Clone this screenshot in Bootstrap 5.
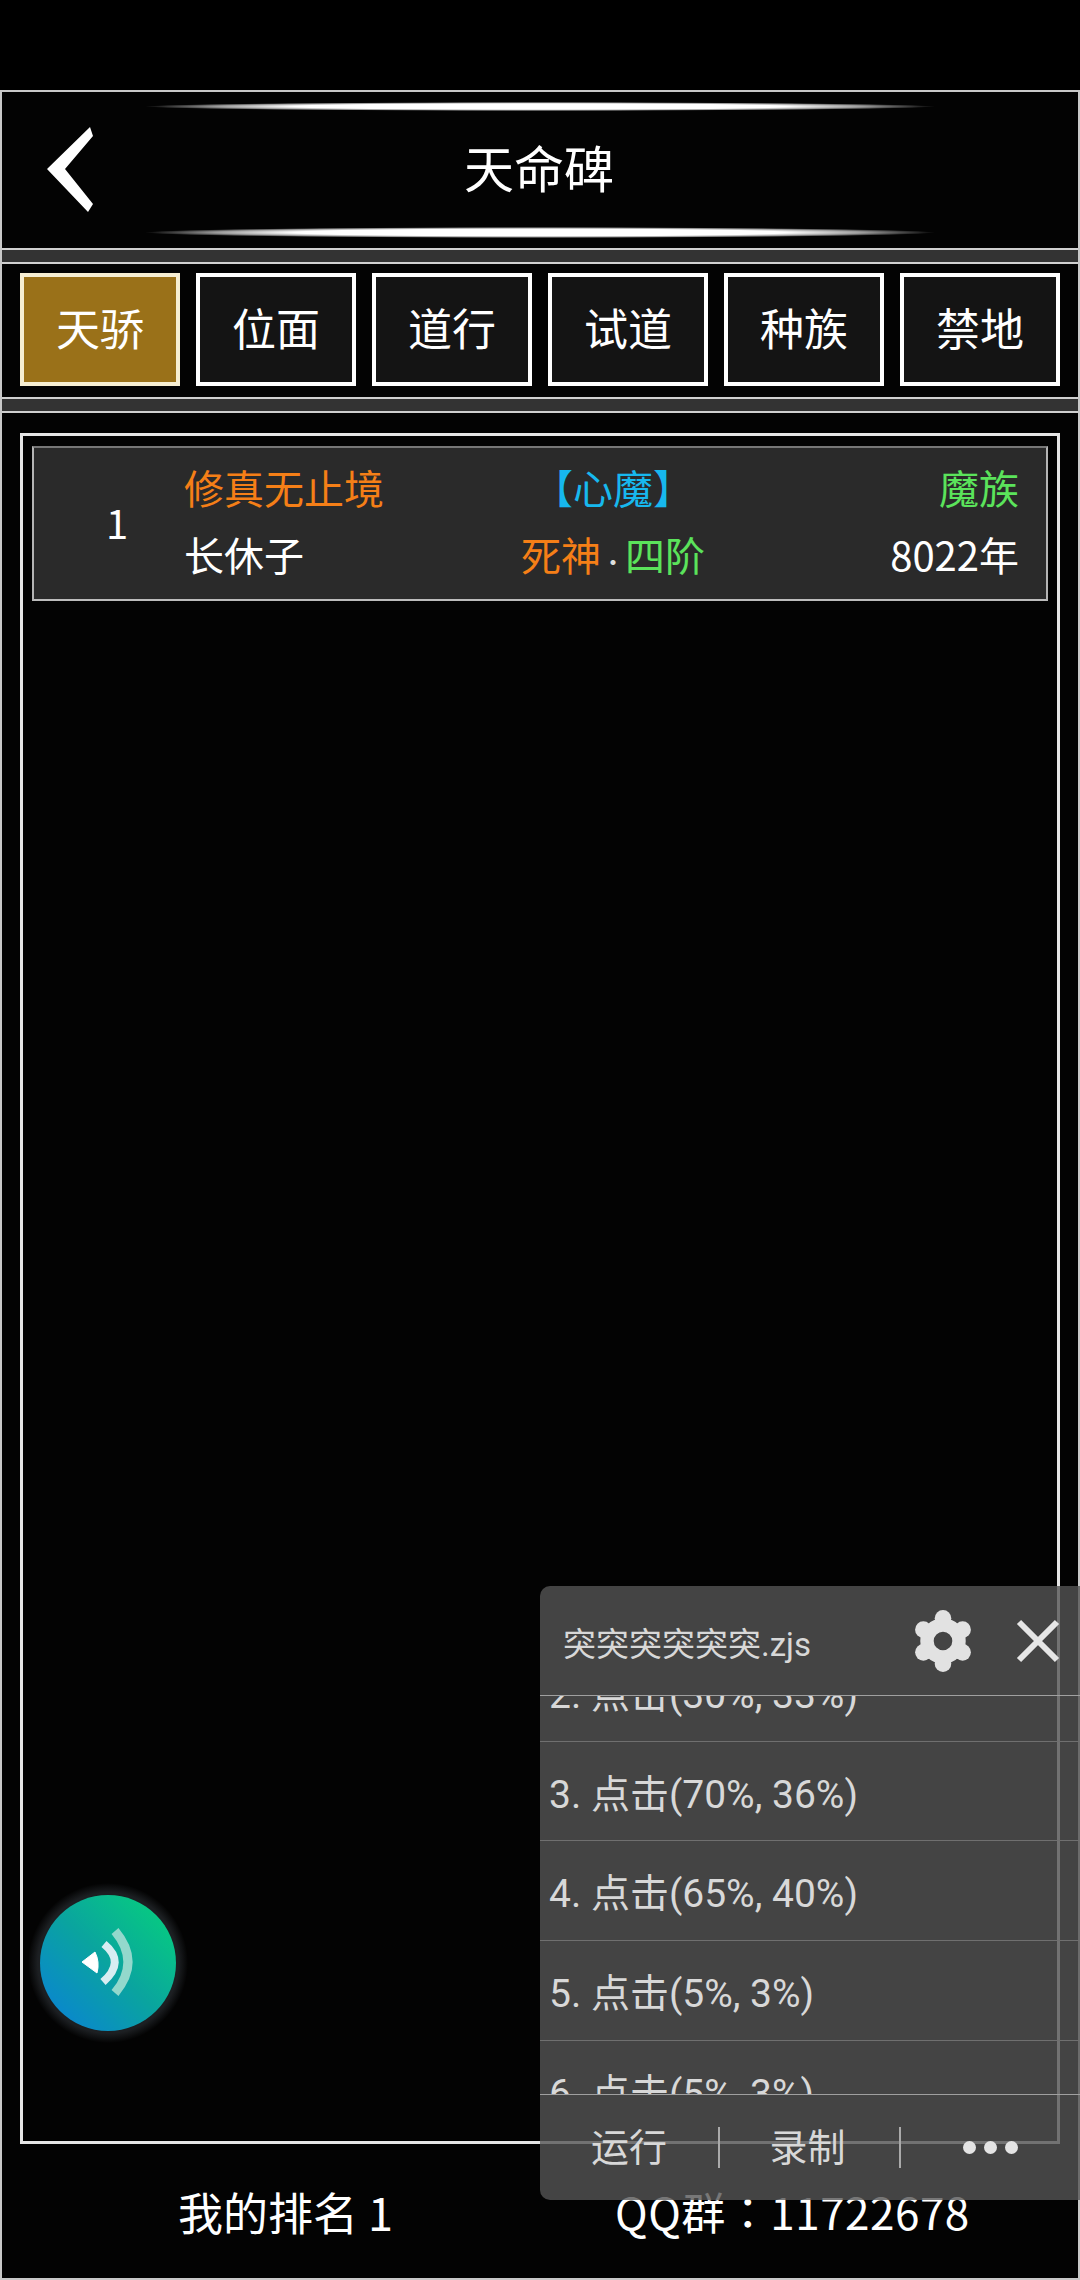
<!DOCTYPE html>
<html lang="zh-CN">
<head>
    <meta charset="UTF-8">
    <meta name="viewport" content="width=device-width, initial-scale=1.0">
    <title>天命碑</title>
    <link href="https://cdn.jsdelivr.net/npm/bootstrap@5.3.0/dist/css/bootstrap.min.css" rel="stylesheet">
    <style>
        body { background: #000; height: 2280px; overflow: hidden; color: #fff; font-family: "Noto Sans CJK SC", "Liberation Sans", sans-serif; }
        .game-frame { margin-top: 90px; height: 2190px; border: 2px solid #c8c8c8; background: #030303; }
        .game-head { height: 156px; padding-top: 10px; padding-bottom: 10px; }
        .glow-line { width: 790px; height: 9px; border-radius: 50%; background: radial-gradient(ellipse closest-side, #fff 62%, rgba(255,255,255,.6) 82%, rgba(255,255,255,0) 100%); }
        .glow-line.thick { height: 11px; }
        .head-main { height: 116px; display: grid; grid-template-columns: 1fr auto 1fr; align-items: center; }
        .back-arrow { width: 46px; height: 85px; margin-left: 45px; display: block; }
        .head-title { font-size: 50px; line-height: 1; margin-right: 2px; margin-bottom: 6px; }
        .band { height: 16px; background: #333; border-top: 2px solid #d0d0d0; border-bottom: 2px solid #d0d0d0; }
        .tab-strip { height: 133px; padding: 9px 18px 0; gap: 16px; }
        .tab-item { width: 160px; height: 113px; border: 4px solid #fff; background: #141414; font-size: 44px; line-height: 1; padding-bottom: 6px; }
        .tab-item.active-tab { background: #9a7119; border-color: #f6eed2; }
        .rank-panel { flex: 1 1 auto; min-height: 0; margin: 20px 18px 0; border: 3px solid #e6e6e6; padding: 10px 9px; }
        .rank-row { height: 155px; background: #2a2a2a; border: 2px solid #b4b4b4; border-top-color: #777; border-bottom-color: #bcbcbc; }
        .rank-num { width: 150px; padding-left: 16px; padding-bottom: 4px; font-size: 40px; text-align: center; }
        .rank-info { display: grid; grid-template-columns: 261px 336px 238px; grid-auto-rows: 67px; align-items: center; font-size: 40px; line-height: 1; margin-top: -6px; }
        .c-orange { color: #f57f17; }
        .c-cyan { color: #17b8ee; }
        .c-green { color: #5be35b; }
        .dot-sep { color: #ddd; font-size: 24px; }
        .foot-bar { height: 134px; padding-left: 176px; gap: 222px; font-size: 45px; line-height: 1; }
        .foot-qq { font-size: 44px; letter-spacing: .5px; }
        .colon-tc { font-family: "Noto Sans CJK TC", sans-serif; }
        .voice-btn { position: absolute; left: 28px; top: 1883px; width: 160px; height: 160px; border-radius: 50%; background: radial-gradient(circle closest-side, #1c1f22 88%, rgba(28,31,34,0) 100%); }
        .voice-disc { width: 136px; height: 136px; border-radius: 50%; background: linear-gradient(45deg, #0a86cf 10%, #0aa49f 50%, #07c684 85%); }
        .script-pop { position: absolute; left: 540px; top: 1586px; width: 540px; height: 614px; background: rgba(85,85,85,.8); border-radius: 10px 0 0 10px; font-family: Roboto, "Noto Sans CJK SC", sans-serif; color: #d8d8d8; }
        .pop-head { height: 110px; padding-left: 23px; border-bottom: 1px solid #a0a0a0; }
        .pop-name { font-size: 33px; line-height: 1; margin-top: 8px; }
        .gear-icon { width: 62px; height: 62px; margin-left: auto; display: block; }
        .close-icon { width: 44px; height: 44px; margin-left: 42px; margin-right: 20px; display: block; }
        .pop-list { height: 398px; overflow: hidden; }
        .pop-list-inner { margin-top: -54px; }
        .step-row { height: 99.7px; padding-left: 9px; padding-top: 8px; border-bottom: 1px solid #6f6f6f; font-size: 39px; line-height: 1; white-space: nowrap; }
        .pop-foot { height: 106px; border-top: 1px solid #a0a0a0; font-size: 38px; line-height: 1; }
        .foot-cell { width: 180px; }
        .first-cell { width: 179px; }
        .mid-cell { padding-right: 4px; }
        .foot-sep { width: 2px; height: 41px; background: #aaa; }
        .more-dot { width: 13px; height: 13px; border-radius: 50%; background: #e4e4e4; }
    </style>
</head>
<body>
    <div class="game-frame d-flex flex-column">
        <div class="game-head d-flex flex-column">
            <div class="glow-line mx-auto"></div>
            <div class="head-main">
                <svg class="back-arrow" viewBox="0 0 46 85"><polygon points="43,0 46,9 18,42 46,77 41,85 0,42" fill="#fff"/></svg>
                <div class="head-title">天命碑</div>
                <div></div>
            </div>
            <div class="glow-line thick mx-auto"></div>
        </div>
        <div class="band"></div>
        <div class="tab-strip d-flex">
            <div class="tab-item active-tab d-flex align-items-center justify-content-center">天骄</div>
            <div class="tab-item d-flex align-items-center justify-content-center">位面</div>
            <div class="tab-item d-flex align-items-center justify-content-center">道行</div>
            <div class="tab-item d-flex align-items-center justify-content-center">试道</div>
            <div class="tab-item d-flex align-items-center justify-content-center">种族</div>
            <div class="tab-item d-flex align-items-center justify-content-center">禁地</div>
        </div>
        <div class="band"></div>
        <div class="rank-panel">
            <div class="rank-row d-flex align-items-center">
                <div class="rank-num">1</div>
                <div class="rank-info">
                    <div class="c-orange">修真无止境</div>
                    <div class="c-cyan text-center">【心魔】</div>
                    <div class="c-green text-end">魔族</div>
                    <div>长休子</div>
                    <div class="text-center"><span class="c-orange">死神</span><span class="dot-sep">·</span><span class="c-green">四阶</span></div>
                    <div class="text-end">8022年</div>
                </div>
            </div>
        </div>
        <div class="foot-bar d-flex align-items-center">
            <div>我的排名 1</div>
            <div class="foot-qq">QQ群<span class="colon-tc" lang="zh-TW">：</span>11722678</div>
        </div>
    </div>

    <div class="voice-btn d-flex align-items-center justify-content-center">
        <div class="voice-disc">
            <svg width="136" height="136" viewBox="0 0 136 136">
                <path d="M42 67 L55 57 Q60 67 57 78 Z" fill="#fff" stroke="#fff" stroke-width="1" stroke-linejoin="round"/>
                <path d="M64 49 Q86 67 63 87" fill="none" stroke="#d8edf2" stroke-width="8"/>
                <path d="M75 36 Q101 67 75 98" fill="none" stroke="#93d8cc" stroke-width="9"/>
            </svg>
        </div>
    </div>

    <div class="script-pop d-flex flex-column">
        <div class="pop-head d-flex align-items-center">
            <div class="pop-name">突突突突突突.zjs</div>
            <svg class="gear-icon" viewBox="0 0 60 60">
                <circle cx="30" cy="30" r="15.5" fill="none" stroke="#e2e2e2" stroke-width="13"/>
                <g fill="#e2e2e2">
                    <circle cx="30" cy="8" r="8"/><circle cx="30" cy="52" r="8"/>
                    <circle cx="11" cy="19" r="8"/><circle cx="49" cy="19" r="8"/>
                    <circle cx="11" cy="41" r="8"/><circle cx="49" cy="41" r="8"/>
                </g>
            </svg>
            <svg class="close-icon" viewBox="0 0 44 44"><path d="M3 3 L41 41 M41 3 L3 41" stroke="#e6e6e6" stroke-width="6" fill="none"/></svg>
        </div>
        <div class="pop-list">
            <div class="pop-list-inner">
                <div class="step-row d-flex align-items-center">2. 点击(30%, 33%)</div>
                <div class="step-row d-flex align-items-center">3. 点击(70%, 36%)</div>
                <div class="step-row d-flex align-items-center">4. 点击(65%, 40%)</div>
                <div class="step-row d-flex align-items-center">5. 点击(5%, 3%)</div>
                <div class="step-row d-flex align-items-center">6. 点击(5%, 3%)</div>
            </div>
        </div>
        <div class="pop-foot d-flex align-items-center">
            <div class="first-cell text-center">运行</div>
            <div class="foot-sep"></div>
            <div class="foot-cell mid-cell text-center">录制</div>
            <div class="foot-sep"></div>
            <div class="foot-cell d-flex justify-content-center gap-2">
                <span class="more-dot"></span><span class="more-dot"></span><span class="more-dot"></span>
            </div>
        </div>
    </div>
    <script src="https://cdn.jsdelivr.net/npm/bootstrap@5.3.0/dist/js/bootstrap.bundle.min.js"></script>
</body>
</html>
